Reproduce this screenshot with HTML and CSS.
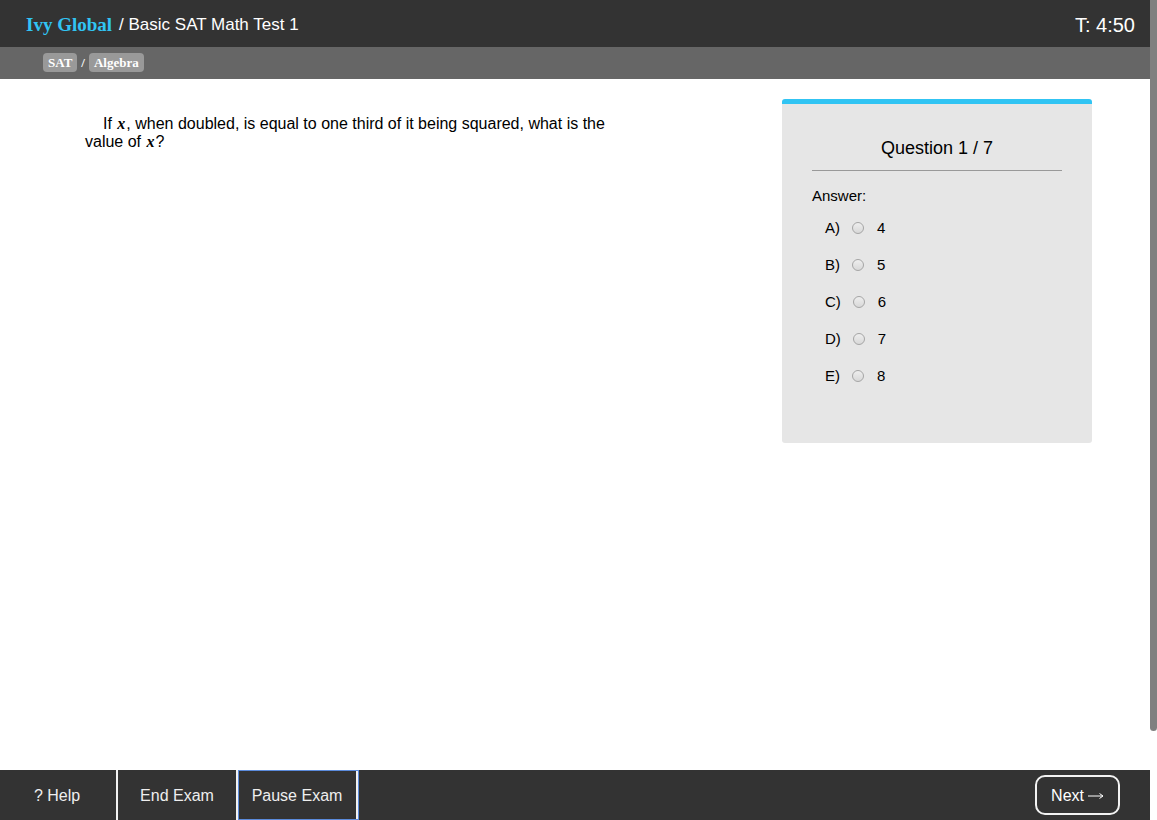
FILE: index.html
```html
<!DOCTYPE html>
<html lang="en">
<head>
<meta charset="utf-8">
<title>Basic SAT Math Test 1</title>
<link rel="stylesheet" href="styles.css">
</head>
<body>
<div class="app">
  <header class="topbar">
    <h1 class="title"><a class="brand" href="#">Ivy Global</a><span>/ Basic SAT Math Test 1</span></h1>
    <div class="timer">T: 4:50</div>
  </header>
  <nav class="crumbs">
    <a class="tag" href="#">SAT</a><span class="slash">/</span><a class="tag" href="#">Algebra</a>
  </nav>
  <main class="content">
    <p class="question">If <i class="var">x</i>, when doubled, is equal to one third of it being squared, what is the value of <i class="var">x</i>?</p>
    <form class="panel">
      <h2 class="count">Question 1 / 7</h2>
      <fieldset class="answers">
        <legend class="legend">Answer:</legend>
        <label class="choice"><span>A)</span><input class="radio" type="radio" name="answer"><span>4</span></label>
        <label class="choice"><span>B)</span><input class="radio" type="radio" name="answer"><span>5</span></label>
        <label class="choice"><span>C)</span><input class="radio" type="radio" name="answer"><span>6</span></label>
        <label class="choice"><span>D)</span><input class="radio" type="radio" name="answer"><span>7</span></label>
        <label class="choice"><span>E)</span><input class="radio" type="radio" name="answer"><span>8</span></label>
      </fieldset>
    </form>
  </main>
  <footer class="bottombar">
    <button class="tool" type="button">? Help</button>
    <button class="tool" type="button">End Exam</button>
    <button class="tool tool-focus" type="button">Pause Exam</button>
    <button class="next" type="button">Next
      <svg class="arrow" viewBox="0 0 16 8" aria-hidden="true"><path d="M0 4H15M11.500 1.500L15 4L11.500 6.500" fill="none" stroke="currentColor" stroke-width="1"/></svg>
    </button>
  </footer>
</div>
<div class="scroll"><div class="thumb"></div></div>
</body>
</html>
```
FILE: styles.css
```css
* { box-sizing: border-box; }
body {
  margin: 0;
  min-height: 100vh;
  display: flex;
  background: #fff;
  color: #000;
  font: 15px/18px "Liberation Sans", Arial, sans-serif;
}
.app { flex: 1; min-width: 0; display: flex; flex-direction: column; }
.topbar {
  display: flex;
  justify-content: space-between;
  align-items: center;
  height: 47px;
  padding: 2px 15px 0 26px;
  background: #333;
  color: #fff;
}
.title {
  display: flex;
  align-items: center;
  gap: 7px;
  margin: 0;
  font-size: 17px;
  font-weight: 400;
  line-height: 24px;
}
.brand {
  color: #31c4f3;
  font: bold 19px/24px "Liberation Serif", serif;
  text-decoration: none;
}
.timer { font-size: 20px; line-height: 24px; }
.crumbs {
  display: flex;
  align-items: center;
  gap: 4px;
  height: 32px;
  padding: 0 0 1px 43px;
  background: #666;
  color: #fff;
  font: bold 13px/19px "Liberation Serif", serif;
}
.tag {
  padding: 0 5px;
  border-radius: 4px;
  background: #999;
  color: #fff;
  text-decoration: none;
}
.content {
  flex: 1;
  display: flex;
  justify-content: space-between;
  align-items: flex-start;
  padding: 20px 58px 20px 85px;
}
.question {
  max-width: 530px;
  margin: 16px 0 0;
  font-size: 16px;
  text-indent: 18px;
}
.var {
  margin: 0 1px;
  font: italic bold 16px/16px "Liberation Serif", serif;
}
.panel {
  flex: none;
  width: 310px;
  padding: 34px 30px 49px;
  border-top: 5px solid #31c4f3;
  border-radius: 3px;
  background: #e6e6e6;
}
.count {
  margin: 0 0 16px;
  padding-bottom: 12px;
  border-bottom: 1px solid #999;
  font-size: 18px;
  font-weight: 400;
  line-height: 20px;
  text-align: center;
}
.answers { margin: 0; padding: 0; border: 0; }
.legend { padding: 0; margin-bottom: 4px; }
.choice {
  display: flex;
  align-items: center;
  height: 37px;
  padding: 0 0 0 13px;
}
.radio {
  appearance: none;
  width: 12px;
  height: 12px;
  margin: 0 13px 0 12px;
  border: 1px solid #a5a5a5;
  border-radius: 50%;
  background: linear-gradient(#eee, #d8d8d8);
}
.bottombar {
  display: flex;
  height: 50px;
  padding-right: 30px;
  background: #333;
}
.tool {
  min-width: 120px;
  padding: 2px 0 0;
  border: 0;
  border-right: 2px solid #f2f2f2;
  background: none;
  color: #eee;
  font: 16px/20px "Liberation Sans", Arial, sans-serif;
}
.tool:first-child { min-width: 118px; padding-right: 2px; }
.tool-focus { outline: 1px solid #5b8bdc; outline-offset: -1px; border-right-width: 3px; min-width: 121px; }
.next {
  display: flex;
  align-items: center;
  gap: 4px;
  align-self: center;
  height: 40px;
  margin-left: auto;
  padding: 2px 14px 0;
  border: 2px solid #f2f2f2;
  border-radius: 10px;
  background: none;
  color: #fff;
  font: 16px/20px "Liberation Sans", Arial, sans-serif;
}
.arrow { width: 16px; height: 8px; }
.scroll { width: 7px; }
.thumb { height: 89.200vh; border-radius: 0 0 4px 4px; background: #808080; }
```
